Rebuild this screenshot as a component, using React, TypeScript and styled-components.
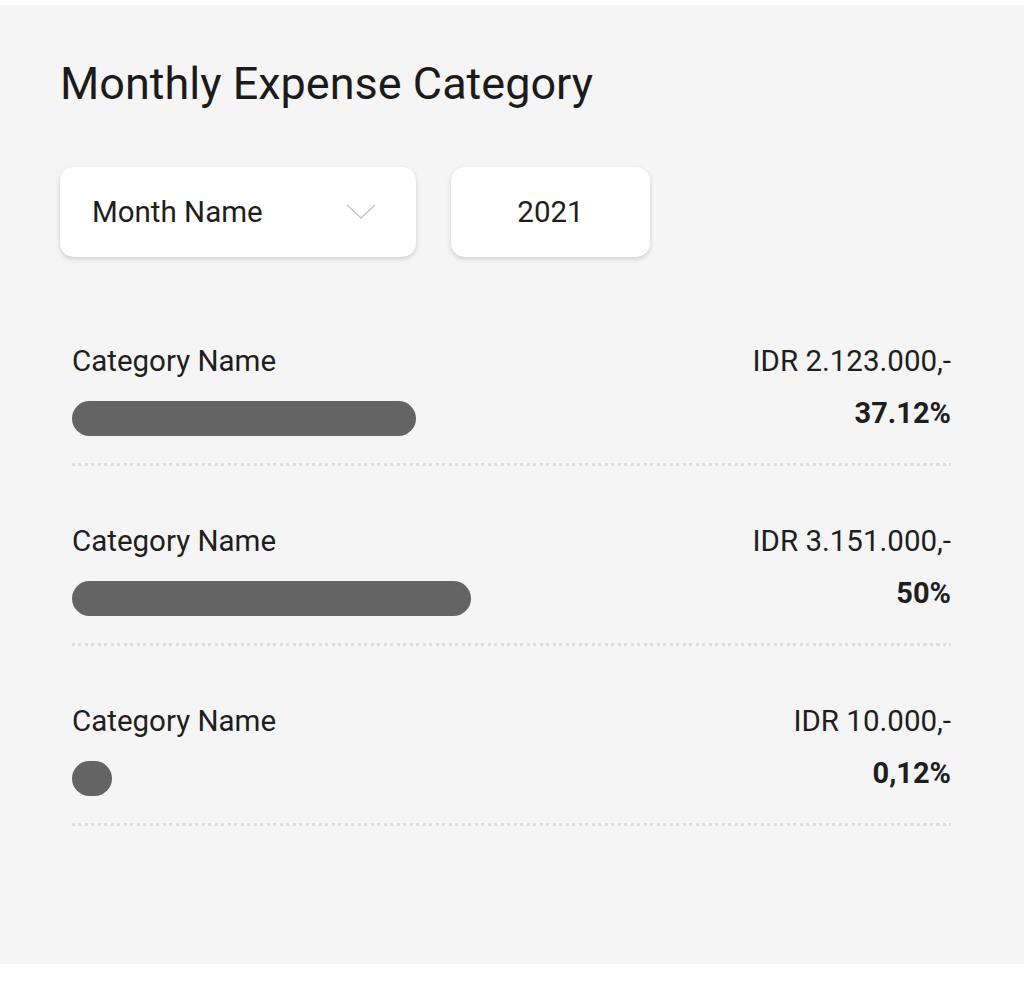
import styled, { createGlobalStyle } from 'styled-components';

const GlobalStyle = createGlobalStyle`
  body {
    margin: 0;
    background: #ffffff;
    font-family: Roboto, "Liberation Sans", Arial, sans-serif;
  }
`;

const ScPanel = styled.section`
  margin-top: 5px;
  height: 959px;
  box-sizing: border-box;
  background: #f5f5f5;
  padding: 52px 73px 0 60px;
`;

const ScTitle = styled.h1`
  margin: 0;
  font-size: 45px;
  line-height: 54px;
  font-weight: 400;
  color: #1b1b1b;
`;

const ScFilters = styled.div`
  display: flex;
  gap: 35px;
  margin-top: 56px;
`;

const ScBox = styled.div<{ $width: number; $center?: boolean }>`
  width: ${p => p.$width}px;
  height: 90px;
  box-sizing: border-box;
  background: #ffffff;
  border-radius: 14px;
  box-shadow: 0 2px 5px rgba(0, 0, 0, 0.16);
  display: flex;
  align-items: center;
  justify-content: ${p => (p.$center ? 'center' : 'space-between')};
  padding: ${p => (p.$center ? '0' : '0 40px 0 32px')};
  font-size: 29.5px;
  color: #1e1e1e;
`;

const ScList = styled.div`
  margin-top: 89px;
  padding-left: 12px;
  display: flex;
  flex-direction: column;
  gap: 60px;
`;

const ScRow = styled.div`
  display: flex;
  flex-direction: column;
`;

const ScLine = styled.div`
  display: flex;
  justify-content: space-between;
  align-items: center;
  font-size: 29.5px;
  line-height: 30px;
  color: #1e1e1e;
`;

const ScBarLine = styled.div`
  display: flex;
  justify-content: space-between;
  align-items: flex-start;
  margin-top: 25px;
  height: 35px;
`;

const ScBar = styled.div`
  height: 35px;
  border-radius: 18px;
  background: #646464;
`;

const ScPercent = styled.span`
  margin-top: -2px;
  font-size: 29px;
  line-height: 29px;
  font-weight: 700;
  color: #1e1e1e;
`;

const ScDivider = styled.div`
  margin-top: 27px;
  height: 3px;
  background: repeating-linear-gradient(to right, #dcdcdc 0 3px, transparent 3px 6.5px);
`;

const categories = [
  { name: 'Category Name', amount: 'IDR 2.123.000,-', percent: '37.12%', bar: 344 },
  { name: 'Category Name', amount: 'IDR 3.151.000,-', percent: '50%', bar: 399 },
  { name: 'Category Name', amount: 'IDR 10.000,-', percent: '0,12%', bar: 40 },
];

function Chevron() {
  return (
    <svg width="30" height="16" viewBox="0 0 30 16" fill="none">
      <polyline points="1,1 15,14 29,1" stroke="#c0c0c0" strokeWidth="1.2" />
    </svg>
  );
}

function App() {
  return (
    <>
      <GlobalStyle />
      <ScPanel>
        <ScTitle>{'Monthly Expense Category'}</ScTitle>
        <ScFilters>
          <ScBox $width={356}>
            <span>{'Month Name'}</span>
            <Chevron />
          </ScBox>
          <ScBox $width={199} $center>{'2021'}</ScBox>
        </ScFilters>
        <ScList>
          {categories.map((c, i) => (
            <ScRow key={i}>
              <ScLine>
                <span>{c.name}</span>
                <span>{c.amount}</span>
              </ScLine>
              <ScBarLine>
                <ScBar style={{ width: c.bar }} />
                <ScPercent>{c.percent}</ScPercent>
              </ScBarLine>
              <ScDivider />
            </ScRow>
          ))}
        </ScList>
      </ScPanel>
    </>
  );
}

export default App;
